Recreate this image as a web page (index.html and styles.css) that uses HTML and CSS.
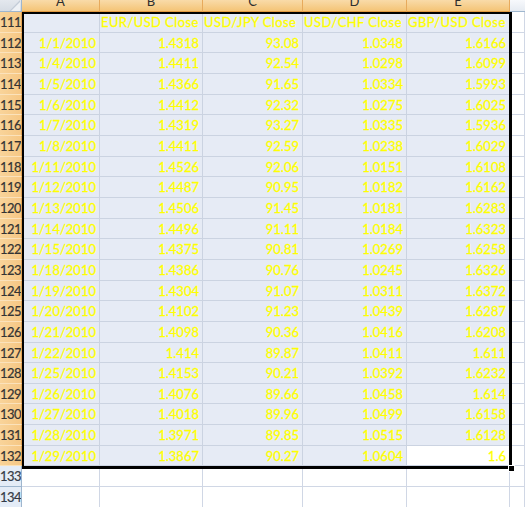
FILE: index.html
```html
<!DOCTYPE html>
<html>
<head>
<meta charset="utf-8">
<link rel="stylesheet" href="styles.css">
</head>
<body>
<div class="sheet">
  <div class="grid">
    <div class="corner"><svg width="22" height="12" viewBox="0 0 22 12"><polygon points="20,0 20,11 9,11" fill="#eef1f5"/><polygon points="20,0 9,11 11,11 20,2" fill="#c3ccd7"/></svg></div>
    <div class="ch"><span>A</span></div>
    <div class="ch"><span>B</span></div>
    <div class="ch"><span>C</span></div>
    <div class="ch"><span>D</span></div>
    <div class="ch"><span>E</span></div>
    <div class="ch off"></div>

    <div class="rh">111</div><div class="c sel"></div><div class="c sel txt">EUR/USD Close</div><div class="c sel txt">USD/JPY Close</div><div class="c sel txt">USD/CHF Close</div><div class="c sel txt">GBP/USD Close</div><div class="c"></div>
    <div class="rh">112</div><div class="c sel">1/1/2010</div><div class="c sel">1.4318</div><div class="c sel">93.08</div><div class="c sel">1.0348</div><div class="c sel">1.6166</div><div class="c"></div>
    <div class="rh">113</div><div class="c sel">1/4/2010</div><div class="c sel">1.4411</div><div class="c sel">92.54</div><div class="c sel">1.0298</div><div class="c sel">1.6099</div><div class="c"></div>
    <div class="rh">114</div><div class="c sel">1/5/2010</div><div class="c sel">1.4366</div><div class="c sel">91.65</div><div class="c sel">1.0334</div><div class="c sel">1.5993</div><div class="c"></div>
    <div class="rh">115</div><div class="c sel">1/6/2010</div><div class="c sel">1.4412</div><div class="c sel">92.32</div><div class="c sel">1.0275</div><div class="c sel">1.6025</div><div class="c"></div>
    <div class="rh">116</div><div class="c sel">1/7/2010</div><div class="c sel">1.4319</div><div class="c sel">93.27</div><div class="c sel">1.0335</div><div class="c sel">1.5936</div><div class="c"></div>
    <div class="rh">117</div><div class="c sel">1/8/2010</div><div class="c sel">1.4411</div><div class="c sel">92.59</div><div class="c sel">1.0238</div><div class="c sel">1.6029</div><div class="c"></div>
    <div class="rh">118</div><div class="c sel">1/11/2010</div><div class="c sel">1.4526</div><div class="c sel">92.06</div><div class="c sel">1.0151</div><div class="c sel">1.6108</div><div class="c"></div>
    <div class="rh">119</div><div class="c sel">1/12/2010</div><div class="c sel">1.4487</div><div class="c sel">90.95</div><div class="c sel">1.0182</div><div class="c sel">1.6162</div><div class="c"></div>
    <div class="rh">120</div><div class="c sel">1/13/2010</div><div class="c sel">1.4506</div><div class="c sel">91.45</div><div class="c sel">1.0181</div><div class="c sel">1.6283</div><div class="c"></div>
    <div class="rh">121</div><div class="c sel">1/14/2010</div><div class="c sel">1.4496</div><div class="c sel">91.11</div><div class="c sel">1.0184</div><div class="c sel">1.6323</div><div class="c"></div>
    <div class="rh">122</div><div class="c sel">1/15/2010</div><div class="c sel">1.4375</div><div class="c sel">90.81</div><div class="c sel">1.0269</div><div class="c sel">1.6258</div><div class="c"></div>
    <div class="rh">123</div><div class="c sel">1/18/2010</div><div class="c sel">1.4386</div><div class="c sel">90.76</div><div class="c sel">1.0245</div><div class="c sel">1.6326</div><div class="c"></div>
    <div class="rh">124</div><div class="c sel">1/19/2010</div><div class="c sel">1.4304</div><div class="c sel">91.07</div><div class="c sel">1.0311</div><div class="c sel">1.6372</div><div class="c"></div>
    <div class="rh">125</div><div class="c sel">1/20/2010</div><div class="c sel">1.4102</div><div class="c sel">91.23</div><div class="c sel">1.0439</div><div class="c sel">1.6287</div><div class="c"></div>
    <div class="rh">126</div><div class="c sel">1/21/2010</div><div class="c sel">1.4098</div><div class="c sel">90.36</div><div class="c sel">1.0416</div><div class="c sel">1.6208</div><div class="c"></div>
    <div class="rh">127</div><div class="c sel">1/22/2010</div><div class="c sel">1.414</div><div class="c sel">89.87</div><div class="c sel">1.0411</div><div class="c sel">1.611</div><div class="c"></div>
    <div class="rh">128</div><div class="c sel">1/25/2010</div><div class="c sel">1.4153</div><div class="c sel">90.21</div><div class="c sel">1.0392</div><div class="c sel">1.6232</div><div class="c"></div>
    <div class="rh">129</div><div class="c sel">1/26/2010</div><div class="c sel">1.4076</div><div class="c sel">89.66</div><div class="c sel">1.0458</div><div class="c sel">1.614</div><div class="c"></div>
    <div class="rh">130</div><div class="c sel">1/27/2010</div><div class="c sel">1.4018</div><div class="c sel">89.96</div><div class="c sel">1.0499</div><div class="c sel">1.6158</div><div class="c"></div>
    <div class="rh">131</div><div class="c sel">1/28/2010</div><div class="c sel">1.3971</div><div class="c sel">89.85</div><div class="c sel">1.0515</div><div class="c sel">1.6128</div><div class="c"></div>
    <div class="rh">132</div><div class="c sel">1/29/2010</div><div class="c sel">1.3867</div><div class="c sel">90.27</div><div class="c sel">1.0604</div><div class="c act">1.6</div><div class="c"></div>
    <div class="rh off">133</div><div class="c"></div><div class="c"></div><div class="c"></div><div class="c"></div><div class="c"></div><div class="c"></div>
    <div class="rh off">134</div><div class="c"></div><div class="c"></div><div class="c"></div><div class="c"></div><div class="c"></div><div class="c"></div>
  </div>
  <div class="selection"></div>
  <div class="handle"></div>
</div>
</body>
</html>
```

FILE: styles.css
```css
html, body {
  margin: 0;
  padding: 0;
  background: #ffffff;
}

.sheet {
  position: relative;
  width: 525px;
  height: 507px;
  overflow: hidden;
  font-family: Lato, "Open Sans", sans-serif;
  font-size: 13px;
}

.grid {
  display: grid;
  grid-template-columns: 22px 78px 103px 100px 104px 103px 1fr;
  grid-template-rows: 12px repeat(24, 20.66px);
}

.corner {
  background: linear-gradient(#e4e8ee, #d6dce4);
  border-right: 1px solid #9eb6ce;
  border-bottom: 1px solid #9eb6ce;
  box-sizing: border-box;
  overflow: hidden;
}
.corner svg { display: block; }

.ch {
  box-sizing: border-box;
  background: linear-gradient(#f9dba9, #f4c476);
  border-right: 1px solid #e7aa5c;
  border-bottom: 1px solid #e19a42;
  color: #2e2e2e;
  text-align: center;
  overflow: hidden;
}
.ch span {
  display: block;
  margin-top: -4.5px;
  line-height: 11px;
}
.ch.off {
  background: linear-gradient(#f7f9fc, #e6ebf2);
  border-right: none;
  border-bottom: 1px solid #9eb6ce;
}

.rh {
  box-sizing: border-box;
  background: linear-gradient(to right, #f9d49a, #f6c784);
  border-right: 1px solid #e3a353;
  border-bottom: 1px solid #fbe2bb;
  color: #333333;
  text-align: center;
  padding-top: 1px;
  line-height: 18.66px;
  letter-spacing: -0.6px;
  overflow: hidden;
  white-space: nowrap;
  -webkit-text-stroke: 0.2px #333333;
}
.rh.off {
  background: #e4ecf7;
  border-right: 1px solid #9eb6ce;
  border-bottom: 1px solid #9eb6ce;
  color: #333d4d;
}

.c {
  box-sizing: border-box;
  border-right: 1px solid #d0d7e5;
  border-bottom: 1px solid #d0d7e5;
  background: #ffffff;
  color: #ffff00;
  padding-top: 1px;
  line-height: 18.66px;
  text-align: right;
  padding-right: 3px;
  white-space: nowrap;
  overflow: hidden;
  -webkit-text-stroke: 0.3px #ffff00;
}
.c.sel {
  background: #e6ebf5;
  border-color: #cbd3e1;
}
.c.txt {
  text-align: left;
  padding-left: 1px;
  padding-right: 0;
  letter-spacing: 0.4px;
  overflow: visible;
}
.c.act {
  background: #ffffff;
  border-color: #cbd3e1;
}

.selection {
  position: absolute;
  left: 22px;
  top: 12px;
  width: 490px;
  height: 457px;
  box-sizing: border-box;
  border-left: 2px solid #000000;
  border-top: 2px solid #000000;
  border-right: 3px solid #000000;
  border-bottom: 3px solid #000000;
  pointer-events: none;
}

.handle {
  position: absolute;
  left: 508px;
  top: 465px;
  width: 5px;
  height: 5px;
  background: #000000;
  border: 1px solid #ffffff;
}
```
